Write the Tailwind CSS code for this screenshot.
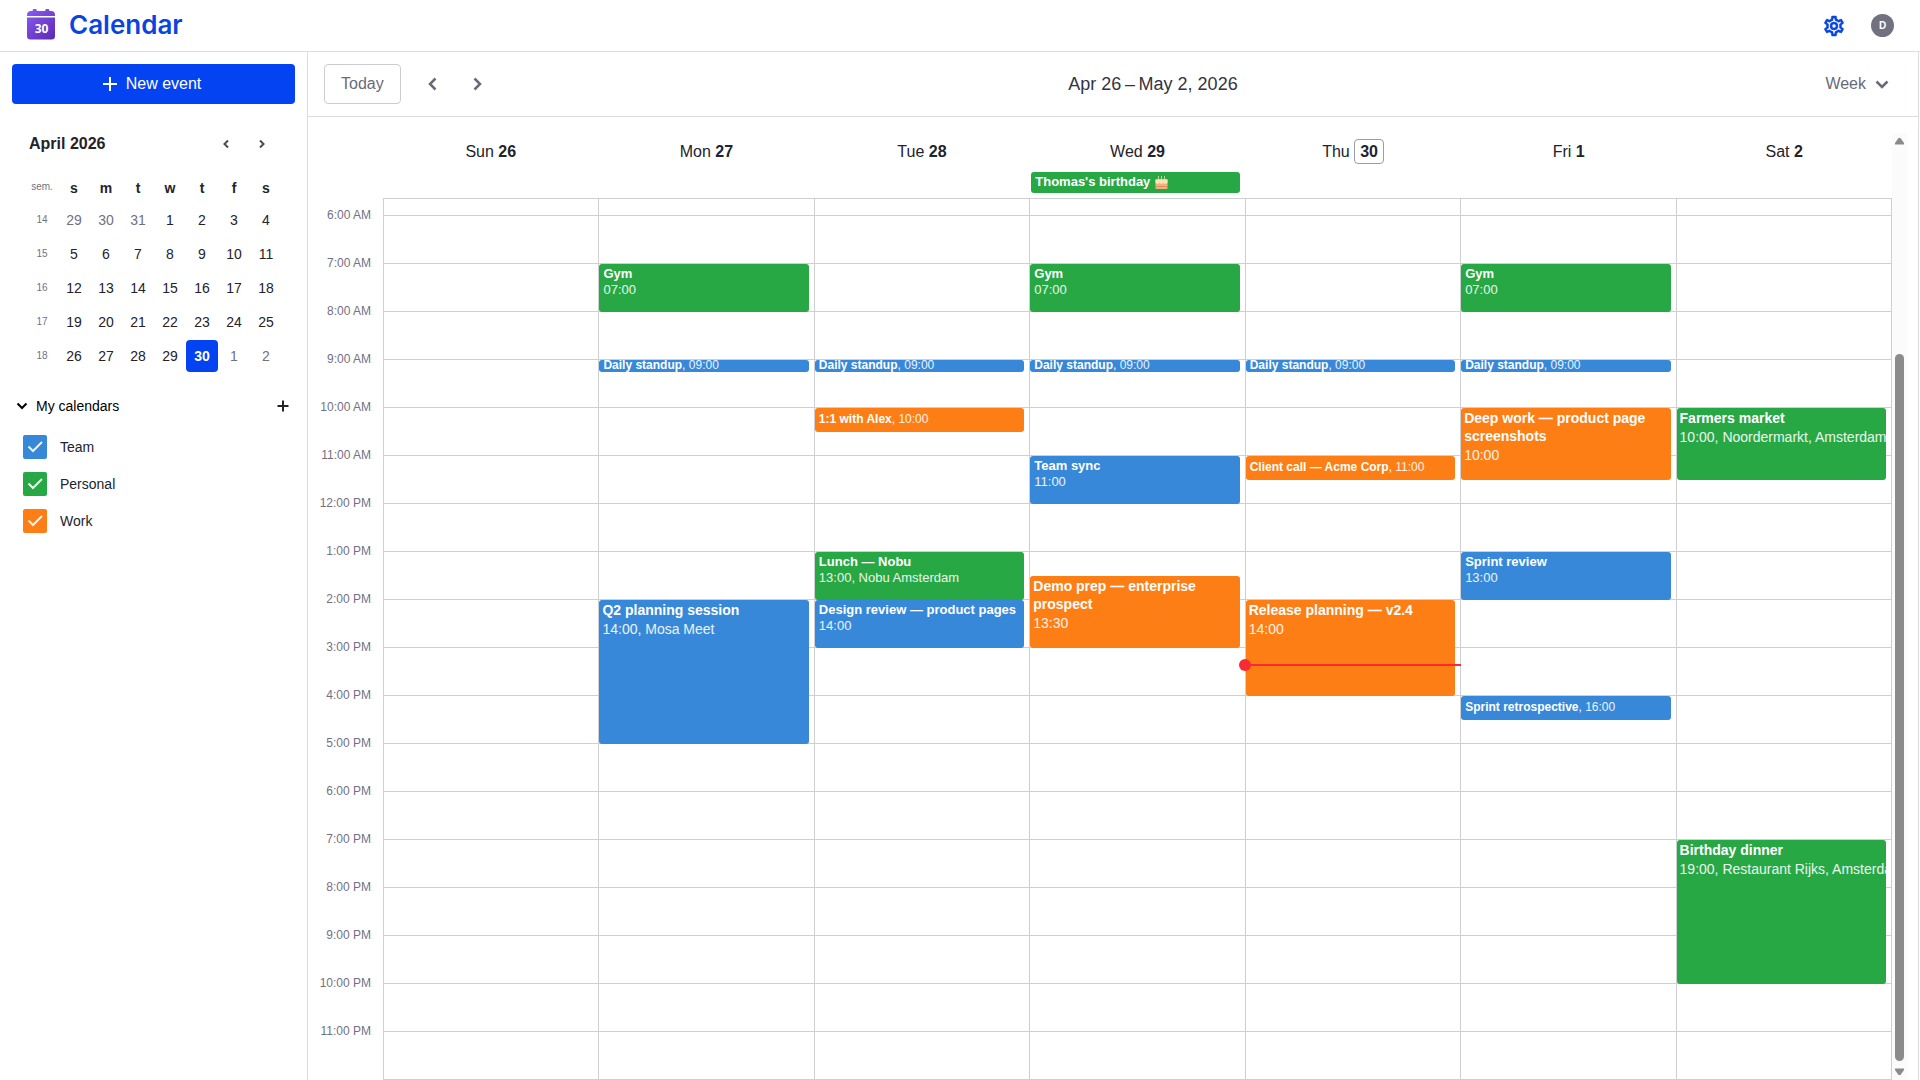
<!DOCTYPE html>
<html lang="en">
<head>
    <meta charset="UTF-8">
    <meta name="viewport" content="width=device-width, initial-scale=1.0">
    <title>Calendar</title>
    <script src="https://cdn.jsdelivr.net/npm/@tailwindcss/browser@4"></script>
</head>
<body class="h-screen flex flex-col overflow-hidden bg-white font-['Liberation_Sans',Arial,sans-serif] text-[#22232b]">
    <!-- Top bar -->
    <header class="h-[52px] shrink-0 flex items-center justify-between border-b border-[#dcdde0] pl-[27px] pr-[26px]">
        <a href="#" class="flex items-center gap-[14px] pb-[2px]">
            <svg class="w-7 h-8" viewBox="0 0 28 32" aria-hidden="true">
                <defs>
                    <linearGradient id="logo" x1="0" y1="0" x2="28" y2="32" gradientUnits="userSpaceOnUse">
                        <stop offset="0" stop-color="#8a5cf5"/>
                        <stop offset="1" stop-color="#5a28b0"/>
                    </linearGradient>
                </defs>
                <path fill="url(#logo)" d="M0 7V6a4 4 0 0 1 4-4h1.500a2.200 2.200 0 0 1 4.400 0h8.200a2.200 2.200 0 0 1 4.400 0H24a4 4 0 0 1 4 4v1z"/>
                <path fill="url(#logo)" d="M0 8.500h28V27a3.500 3.500 0 0 1-3.500 3.500h-21A3.500 3.500 0 0 1 0 27z"/>
                <text x="14.500" y="24" text-anchor="middle" fill="#fff" font-family="Noto Sans, sans-serif" font-weight="700" font-size="12">30</text>
            </svg>
            <span class="font-[Inter,sans-serif] font-semibold text-[26px] leading-8 text-[#0a44e0]">Calendar</span>
        </a>
        <div class="flex items-center gap-[25px]">
            <button aria-label="Settings" class="text-[#0a44e0]">
                <svg class="w-6 h-6" viewBox="0 0 24 24" fill="currentColor"><path d="M19.430 12.980c.04-.32.07-.64.07-.98 0-.34-.03-.66-.07-.98l2.110-1.650c.19-.15.24-.42.12-.64l-2-3.460a.5.500 0 0 0-.61-.22l-2.490 1c-.52-.4-1.080-.73-1.690-.98l-.38-2.650A.488.488 0 0 0 14 2h-4c-.25 0-.46.180-.49.420l-.38 2.650c-.61.250-1.170.590-1.690.980l-2.490-1a.5.500 0 0 0-.61.220l-2 3.460c-.13.220-.07.490.12.640l2.110 1.650c-.04.320-.07.650-.07.980s.03.660.07.980l-2.110 1.650c-.19.150-.24.420-.12.640l2 3.460c.12.220.38.300.61.220l2.490-1c.52.400 1.080.730 1.690.980l.38 2.650c.03.240.24.420.49.420h4c.25 0 .46-.18.490-.42l.38-2.650c.61-.25 1.170-.59 1.690-.98l2.490 1c.23.080.49 0 .61-.22l2-3.460c.12-.22.07-.49-.12-.64zm-1.980-1.710c.04.310.05.520.05.730s-.02.430-.05.730l-.14 1.130.89.700 1.080.84-.7 1.210-1.270-.51-1.040-.42-.9.680c-.43.320-.84.560-1.250.730l-1.060.43-.16 1.130-.2 1.350h-1.400l-.19-1.350-.16-1.130-1.060-.43c-.43-.18-.83-.41-1.230-.71l-.91-.7-1.060.43-1.270.51-.7-1.210 1.080-.84.89-.7-.14-1.130c-.03-.31-.05-.54-.05-.74s.02-.43.050-.73l.14-1.130-.89-.7-1.080-.84.7-1.210 1.270.51 1.040.42.9-.68c.43-.32.84-.56 1.250-.73l1.060-.43.16-1.130.2-1.350h1.390l.19 1.350.16 1.130 1.060.43c.43.180.83.410 1.230.71l.91.7 1.060-.43 1.270-.51.7 1.210-1.070.85-.89.7zM12 8a4 4 0 1 0 0 8 4 4 0 0 0 0-8zm0 6a2 2 0 1 1 0-4 2 2 0 0 1 0 4z" stroke="currentColor" stroke-width=".5"/></svg>
            </button>
            <button aria-label="Account" class="size-[23px] rounded-full bg-[#717182] text-white text-[10px] font-bold leading-none">D</button>
        </div>
    </header>

    <div class="flex flex-1 min-h-0">
        <!-- Sidebar -->
        <aside class="w-[308px] shrink-0 border-r border-[#dcdde0] px-3 pt-3">
            <button class="w-full h-10 rounded bg-[#0443f2] text-white text-base flex items-center justify-center gap-2 pr-1">
                <svg class="size-4" viewBox="0 0 16 16" stroke="currentColor" stroke-width="2"><path d="M8 1v14M1 8h14"/></svg>
                New event
            </button>

            <div class="flex items-center justify-between mt-6 pl-[17px] pr-[17px] h-8">
                <h2 class="text-base font-bold">April 2026</h2>
                <div class="flex gap-1 text-[#4a4b57]">
                    <button aria-label="Previous month" class="size-8 flex items-center justify-center"><svg class="size-3" viewBox="0 0 12 12" fill="none" stroke="currentColor" stroke-width="2"><path d="M8 2.500L4.500 6 8 9.500"/></svg></button>
                    <button aria-label="Next month" class="size-8 flex items-center justify-center"><svg class="size-3" viewBox="0 0 12 12" fill="none" stroke="currentColor" stroke-width="2"><path d="M4 2.500L7.500 6 4 9.500"/></svg></button>
                </div>
            </div>

            <table class="ml-[14px] mt-3 table-fixed w-64 text-center text-sm">
                <thead>
                    <tr class="h-[31px]">
                        <th class="text-[10px] font-normal text-[#717182]">sem.</th>
                        <th>s</th><th>m</th><th>t</th><th>w</th><th>t</th><th>f</th><th>s</th>
                    </tr>
                </thead>
                <tbody id="miniMonth"></tbody>
            </table>

            <div class="flex items-center justify-between mt-[17px] pl-1 pr-1 h-8">
                <button class="flex items-center gap-2 text-sm text-black">
                    <svg class="size-3" viewBox="0 0 12 12" fill="none" stroke="currentColor" stroke-width="2"><path d="M1.500 3.500L6 8l4.500-4.500"/></svg>
                    My calendars
                </button>
                <button aria-label="Add calendar"><svg class="size-4" viewBox="0 0 16 16" stroke="currentColor" stroke-width="2"><path d="M8 2.500v11M2.500 8h11"/></svg></button>
            </div>

            <div id="calendars" class="mt-1.5 pl-[11px]"></div>
        </aside>

        <!-- Week view -->
        <main class="flex-1 min-w-0 flex flex-col border-r border-[#dcdde0] mr-px">
            <div class="h-[65px] shrink-0 grid grid-cols-3 items-center border-b border-[#dcdde0] pl-4 pr-7 text-[#696a79]">
                <div class="flex items-center">
                    <button class="h-10 px-4 rounded border border-[#cccdd4] text-base">Today</button>
                    <button aria-label="Previous week" class="ml-[10px] w-11 h-10 flex items-center justify-center"><svg class="size-4" viewBox="0 0 16 16" fill="none" stroke="currentColor" stroke-width="2.500"><path d="M10.500 2.500L5 8l5.500 5.500"/></svg></button>
                    <button aria-label="Next week" class="w-11 h-10 flex items-center justify-center"><svg class="size-4" viewBox="0 0 16 16" fill="none" stroke="currentColor" stroke-width="2.500"><path d="M5.500 2.500L11 8l-5.500 5.500"/></svg></button>
                </div>
                <h1 class="text-lg text-center text-[#33343f] pl-[92px] whitespace-nowrap">Apr 26&thinsp;–&thinsp;May 2, 2026</h1>
                <button class="justify-self-end flex items-center gap-2 text-base">
                    Week
                    <svg class="size-4" viewBox="0 0 16 16" fill="none" stroke="currentColor" stroke-width="2.500"><path d="M2.500 5.500L8 11l5.500-5.500"/></svg>
                </button>
            </div>

            <div class="flex flex-1 min-h-0">
                <div class="flex-1 min-w-0 flex flex-col pt-4">
                    <div id="dayNames" class="grid grid-cols-7 shrink-0 ml-[75px] h-[37px] text-base text-center"></div>
                    <div id="allDay" class="grid grid-cols-7 shrink-0 ml-[76px] h-7 pt-[2px]"></div>
                    <div class="flex flex-1 min-h-0">
                        <div id="hours" class="w-[75px] shrink-0 text-right text-xs text-[#717182] pr-3 pt-[9px]"></div>
                        <div id="week" class="flex-1 grid grid-cols-7 border-t border-r border-[#cfcfd2] overflow-hidden"></div>
                    </div>
                </div>
                <!-- Scroll rail -->
                <div class="w-[15px] mr-[11px] mt-4 shrink-0 flex flex-col items-center bg-[#fbfbfb] py-1 text-[#8b8b8b]">
                    <svg class="w-[9px] h-2 shrink-0" viewBox="0 0 9 8" fill="currentColor"><path d="M3.500 1h2L9 6v1.500H0V6z"/></svg>
                    <div class="flex-1 basis-0 grow-[209]"></div>
                    <div class="w-[9px] basis-0 grow-[708] rounded-full bg-[#8b8b8b]"></div>
                    <svg class="w-[9px] h-2 shrink-0 mt-[7px]" viewBox="0 0 9 8" fill="currentColor"><path d="M0 .5h9V2L5.500 7h-2L0 2z"/></svg>
                </div>
            </div>
        </main>
    </div>

    <script>
        const HOUR = 48;        // height of one hour row
        const FIRST_HOUR = 6;
        const TOP = 16;         // part of the 5 AM row that is still in view

        const colors = {
            team: "bg-[#3788d8]",
            personal: "bg-[#28a745]",
            work: "bg-[#fd7e14]"
        };

        const calendars = [["Team", "team"], ["Personal", "personal"], ["Work", "work"]];

        const days = [["Sun", 26], ["Mon", 27], ["Tue", 28], ["Wed", 29], ["Thu", 30], ["Fri", 1], ["Sat", 2]];

        // day, start, length in hours, calendar, title, place
        const events = [
            [1, 7, 1, "personal", "Gym"],
            [1, 9, 0.25, "team", "Daily standup"],
            [1, 14, 3, "team", "Q2 planning session", "Mosa Meet"],
            [2, 9, 0.25, "team", "Daily standup"],
            [2, 10, 0.5, "work", "1:1 with Alex"],
            [2, 13, 1, "personal", "Lunch — Nobu", "Nobu Amsterdam"],
            [2, 14, 1, "team", "Design review — product pages"],
            [3, 7, 1, "personal", "Gym"],
            [3, 9, 0.25, "team", "Daily standup"],
            [3, 11, 1, "team", "Team sync"],
            [3, 13.5, 1.5, "work", "Demo prep — enterprise prospect"],
            [4, 9, 0.25, "team", "Daily standup"],
            [4, 11, 0.5, "work", "Client call — Acme Corp"],
            [4, 14, 2, "work", "Release planning — v2.4"],
            [5, 7, 1, "personal", "Gym"],
            [5, 9, 0.25, "team", "Daily standup"],
            [5, 10, 1.5, "work", "Deep work — product page screenshots"],
            [5, 13, 1, "team", "Sprint review"],
            [5, 16, 0.5, "team", "Sprint retrospective"],
            [6, 10, 1.5, "personal", "Farmers market", "Noordermarkt, Amsterdam"],
            [6, 19, 3, "personal", "Birthday dinner", "Restaurant Rijks, Amsterdam"]
        ];

        function clock(t) {
            return String(Math.floor(t)).padStart(2, "0") + ":" + (t % 1 ? "30" : "00");
        }

        function eventHtml([, start, length, cal, title, place]) {
            const when = clock(start) + (place ? ", " + place : "");
            const box = `style="top:${TOP + 1 + (start - FIRST_HOUR) * HOUR}px;height:${length * HOUR}px"`;
            const base = `absolute left-0 right-[5px] rounded-[3px] overflow-hidden text-white text-left ${colors[cal]}`;
            if (length < 1) {
                const line = length < 0.5 ? "leading-[11px]" : "leading-[22px]";
                return `<a href="#" class="${base} block whitespace-nowrap px-1 text-xs ${line}" ${box}><b>${title}</b>, <span class="text-white/90">${when}</span></a>`;
            }
            if (length === 1) {
                return `<a href="#" class="${base} block px-1 text-[13px] leading-4 pt-[2px]" ${box}><b class="block whitespace-nowrap">${title}</b><span class="block whitespace-nowrap text-white/90">${when}</span></a>`;
            }
            return `<a href="#" class="${base} block px-[3px] text-sm leading-[18px] pt-px" ${box}><b class="block">${title}</b><span class="block whitespace-nowrap pt-px text-white/90">${when}</span></a>`;
        }

        // Mini month
        let month = "";
        for (let w = 0; w < 5; w++) {
            month += `<tr class="h-[34px]"><td class="text-[10px] text-[#717182]">${14 + w}</td>`;
            for (let d = 0; d < 7; d++) {
                const n = w * 7 + d - 2;
                const label = n < 1 ? n + 31 : n > 30 ? n - 30 : n;
                let look = n < 1 || n > 30 ? "text-[#717182]" : "";
                if (n === 30) look = "bg-[#0443f2] text-white font-bold";
                month += `<td><button class="size-8 align-middle rounded ${look}">${label}</button></td>`;
            }
            month += "</tr>";
        }
        document.getElementById("miniMonth").innerHTML = month;

        document.getElementById("calendars").innerHTML = calendars.map(([name, cal]) => `
            <label class="flex items-center gap-[13px] h-[37px] text-sm">
                <span class="relative size-6">
                    <input type="checkbox" checked class="appearance-none block size-6 rounded-[2px] ${colors[cal]}">
                    <svg class="absolute inset-0 size-6 pointer-events-none" viewBox="0 0 24 24" fill="none" stroke="#fff" stroke-opacity=".9" stroke-width="2"><path d="M5.500 11.500l4.500 4.500 9-9"/></svg>
                </span>
                ${name}
            </label>`).join("");

        document.getElementById("dayNames").innerHTML = days.map(([name, n]) =>
            `<div class="h-9 leading-[38px]">${name} <b class="${n === 30 ? "border border-[#9a9bab] rounded px-[5px] py-[3px]" : ""}">${n}</b></div>`).join("");

        document.getElementById("allDay").innerHTML =
            `<a href="#" class="col-start-4 h-[21px] mr-1.5 ml-px rounded-[3px] px-1 pb-[2px] text-white text-[13px] font-bold whitespace-nowrap flex items-center gap-[5px] ${colors.personal}">Thomas's birthday
                <svg class="w-[13px] h-[14px]" viewBox="0 0 13 14" aria-hidden="true"><path d="M3.500 1v3M6.500 1v3M9.500 1v3" stroke="#b9d39a"/><rect x=".5" y="4" width="12" height="10" rx="1" fill="#f2b183"/><path fill="#ffe3b5" d="M.5 4.500h12V8l-2 1-2-1-2 1-2-1-2 1-2-1z"/><path d="M1 11.500h11" stroke="#e0905f"/></svg>
            </a>`;

        let hours = "";
        for (let h = 6; h < 24; h++) {
            hours += `<div class="h-12 leading-4">${h % 12 || 12}:00 ${h < 12 ? "AM" : "PM"}</div>`;
        }
        document.getElementById("hours").innerHTML = hours;

        const rows = `<div class="h-[17px] border-b border-[#cfcfd2]"></div>` + `<div class="h-12 border-b border-[#cfcfd2]"></div>`.repeat(18);
        const now = `<div class="absolute left-0 right-[-1px] h-[2px] bg-[#fa2a35]" style="top:${TOP + 9.333 * HOUR + 1}px"><span class="absolute -left-[7px] -top-[5px] size-3 rounded-full bg-[#fa2a35]"></span></div>`;
        document.getElementById("week").innerHTML = days.map(([, n], i) => `
            <div class="relative border-l border-[#cfcfd2] ${n === 30 ? "z-10" : ""}">
                ${rows}
                ${events.filter(e => e[0] === i).map(eventHtml).join("")}
                ${n === 30 ? now : ""}
            </div>`).join("");
    </script>
</body>
</html>
